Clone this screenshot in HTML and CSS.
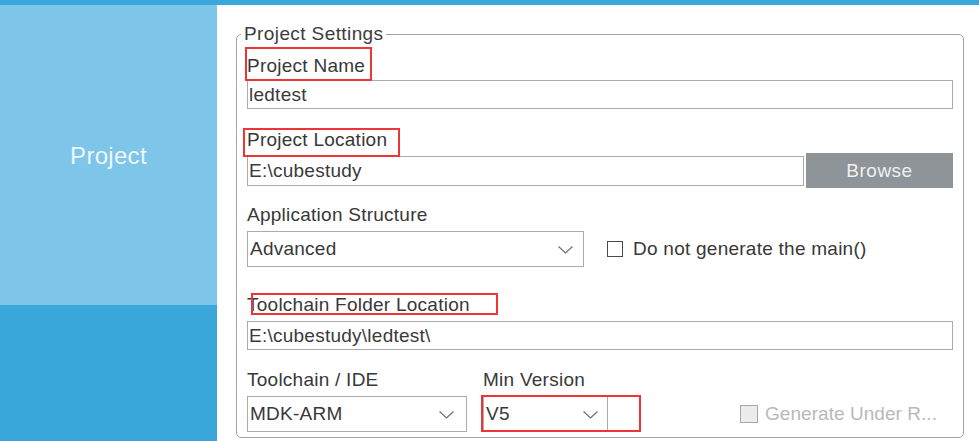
FILE: index.html
```html
<!DOCTYPE html>
<html>
<head>
<meta charset="utf-8">
<link rel="stylesheet" href="styles.css">
</head>
<body>
<div class="topbar"></div>
<div class="app">
  <aside class="sidebar">
    <div class="nav-item">Project</div>
  </aside>
  <main class="main">
    <fieldset class="settings">
      <legend>Project Settings</legend>

      <div class="group g1">
        <div class="lbl">Project Name<i class="mark m1"></i></div>
        <div class="field f-name">ledtest</div>
      </div>

      <div class="group g2">
        <div class="lbl">Project Location<i class="mark m2"></i></div>
        <div class="row-browse">
          <div class="field f-loc">E:\cubestudy</div>
          <div class="btn">Browse</div>
        </div>
      </div>

      <div class="group g3">
        <div class="lbl">Application Structure</div>
        <div class="row-app">
          <div class="select s-app"><span>Advanced</span><svg class="chev" width="15" height="8" viewBox="0 0 15 8"><polyline points="0.5,0.5 7.5,7 14.5,0.5" fill="none" stroke="#707070" stroke-width="1.2"/></svg></div>
          <div class="check"><span class="box"></span><span>Do not generate the main()</span></div>
        </div>
      </div>

      <div class="group g4">
        <div class="lbl">Toolchain Folder Location<i class="mark m3"></i></div>
        <div class="field f-tool">E:\cubestudy\ledtest\</div>
      </div>

      <div class="group g5">
        <div class="col c-ide">
          <div class="lbl">Toolchain / IDE</div>
          <div class="select"><span>MDK-ARM</span><svg class="chev" width="15" height="8" viewBox="0 0 15 8"><polyline points="0.5,0.5 7.5,7 14.5,0.5" fill="none" stroke="#707070" stroke-width="1.2"/></svg></div>
        </div>
        <div class="col c-ver">
          <div class="lbl">Min Version</div>
          <div class="select s-ver"><span>V5</span><svg class="chev" width="15" height="8" viewBox="0 0 15 8"><polyline points="0.5,0.5 7.5,7 14.5,0.5" fill="none" stroke="#707070" stroke-width="1.2"/></svg><i class="mark m4"></i></div>
        </div>
        <div class="check disabled"><span class="box"></span><span>Generate Under R...</span></div>
      </div>
    </fieldset>
  </main>
</div>
</body>
</html>
```

FILE: styles.css
```css
html, body {
  margin: 0;
  padding: 0;
  background: #ffffff;
  overflow: hidden;
}

body {
  width: 979px;
  height: 441px;
  font-family: "Liberation Sans", Arial, sans-serif;
  font-size: 19px;
  letter-spacing: 0.25px;
  color: #383838;
}

.topbar {
  height: 5px;
  background: #3aa7da;
}

.app {
  display: flex;
  height: 436px;
}

.sidebar {
  width: 217px;
  flex: none;
  background: #3aa7da;
}

.nav-item {
  height: 300px;
  background: #7dc5e9;
  color: #eef7fc;
  font-size: 24px;
  letter-spacing: 0.3px;
  display: flex;
  align-items: center;
  justify-content: center;
  padding-top: 2px;
  box-sizing: border-box;
}

.main {
  flex: 1;
  min-width: 0;
}

.settings {
  margin: 18px 15px 0 19px;
  padding: 0 10px 5px 10px;
  border: 1px solid #a3a7ab;
  border-radius: 5px;
  min-width: 0;
}

.settings legend {
  font-size: 19px;
  line-height: 22px;
  padding: 0 3px;
  margin-left: -6px;
  letter-spacing: 0.4px;
  color: #3c3c3c;
}

.lbl {
  position: relative;
  line-height: 22px;
  height: 22px;
  white-space: nowrap;
}

.mark {
  position: absolute;
  border: 2px solid #ee3535;
  box-sizing: border-box;
  pointer-events: none;
}

.m1 { left: -2px; top: -8px; width: 127px; height: 34px; }
.m2 { left: -4px; top: -1px; width: 157px; height: 29px; }
.m3 { left: 4px; top: -1px; width: 247px; height: 22px; }
.m4 { left: -3px; top: -2px; width: 160px; height: 37px; }

.g1 { margin-top: 10px; }
.g2 { margin-top: 20px; }
.g3 { margin-top: 16px; }
.g4 { margin-top: 27px; }
.g5 { margin-top: 19px; }

.field {
  border: 1px solid #a9abad;
  box-sizing: border-box;
  height: 29px;
  line-height: 27px;
  padding-left: 1px;
  white-space: nowrap;
  color: #3a3a3a;
}

.f-name { margin-top: 3px; }
.f-tool { margin-top: 5px; height: 29px; }

.row-browse {
  margin-top: 2px;
  display: flex;
  align-items: center;
  height: 35px;
}

.f-loc {
  flex: 1;
  height: 30px;
  line-height: 28px;
}

.btn {
  width: 147px;
  height: 35px;
  margin-left: 2px;
  background: #8e9498;
  color: #eef0f2;
  display: flex;
  align-items: center;
  justify-content: center;
  letter-spacing: 0.5px;
}

.row-app {
  margin-top: 5px;
  display: flex;
  align-items: center;
}

.select {
  position: relative;
  height: 36px;
  border: 1px solid #a9abad;
  box-sizing: border-box;
  display: flex;
  align-items: center;
  justify-content: space-between;
  padding: 0 10px 0 2px;
  white-space: nowrap;
}

.s-app { width: 337px; }

.chev {
  display: block;
  margin-top: 1px;
}

.check {
  display: flex;
  align-items: center;
  margin-left: 23px;
  white-space: nowrap;
}

.check .box {
  width: 16px;
  height: 16px;
  border: 1px solid #4a4a4a;
  box-sizing: border-box;
  margin-right: 10px;
  background: #ffffff;
}

.g5 {
  display: flex;
  align-items: flex-end;
}

.col .select {
  margin-top: 5px;
}

.c-ide { width: 220px; }
.c-ide .select { padding-right: 12px; }

.c-ver {
  width: 125px;
  margin-left: 16px;
}

.s-ver { padding-right: 9px; }

.check.disabled {
  margin-left: auto;
  margin-right: 16px;
  height: 36px;
  color: #b9b9b9;
  letter-spacing: 0.05px;
}

.check.disabled .box {
  width: 18px;
  height: 18px;
  border: 1px solid #a7a7a7;
  background: #ececec;
  margin-right: 7px;
}
```
